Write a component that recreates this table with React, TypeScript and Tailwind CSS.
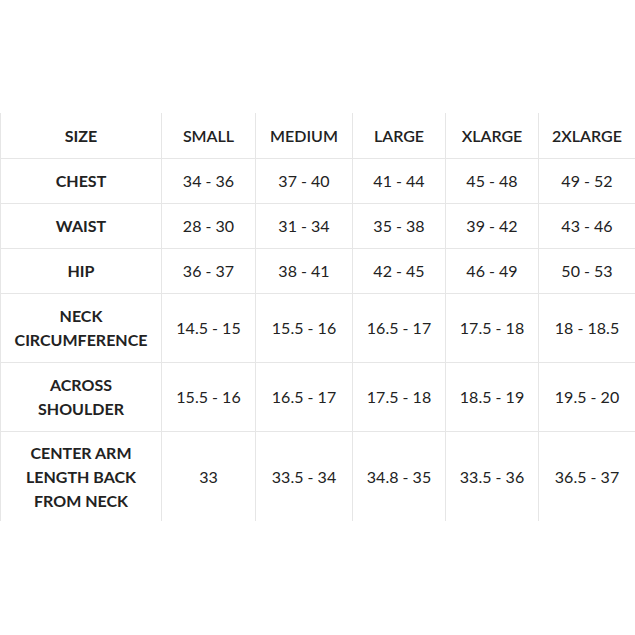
import React from "react";

const headers = ["SMALL", "MEDIUM", "LARGE", "XLARGE", "2XLARGE"];
const rows: { label: string[]; values: string[]; h: string }[] = [
  { label: ["CHEST"], values: ["34 - 36", "37 - 40", "41 - 44", "45 - 48", "49 - 52"], h: "h-[45px]" },
  { label: ["WAIST"], values: ["28 - 30", "31 - 34", "35 - 38", "39 - 42", "43 - 46"], h: "h-[45px]" },
  { label: ["HIP"], values: ["36 - 37", "38 - 41", "42 - 45", "46 - 49", "50 - 53"], h: "h-[45px]" },
  { label: ["NECK", "CIRCUMFERENCE"], values: ["14.5 - 15", "15.5 - 16", "16.5 - 17", "17.5 - 18", "18 - 18.5"], h: "h-[69px]" },
  { label: ["ACROSS", "SHOULDER"], values: ["15.5 - 16", "16.5 - 17", "17.5 - 18", "18.5 - 19", "19.5 - 20"], h: "h-[69px]" },
  { label: ["CENTER ARM", "LENGTH BACK", "FROM NECK"], values: ["33", "33.5 - 34", "34.8 - 35", "33.5 - 36", "36.5 - 37"], h: "h-[89px]" },
];

export default function App() {
  return (
    <div className="w-[635px] h-[635px] bg-white pt-[113px] text-[#222222] text-[16px] leading-[24px]" style={{ fontFamily: "Lato, 'Open Sans', sans-serif" }}>
      <div className="grid grid-cols-[161px_94px_97px_93px_93px_97px]">
        <div className="h-[46px] border-l border-b border-[#e6e6e6] flex items-center justify-center font-bold">SIZE</div>
        {headers.map((h) => (
          <div key={h} className="h-[46px] border-l border-b border-[#e6e6e6] flex items-center justify-center font-semibold">{h}</div>
        ))}
        {rows.map((r, i) => {
          const last = i === rows.length - 1;
          const b = last ? "" : "border-b";
          return (
            <React.Fragment key={i}>
              <div className={`${r.h} border-l ${b} border-[#e6e6e6] flex flex-col items-center justify-center font-bold text-center`}>
                {r.label.map((l) => (
                  <span key={l}>{l}</span>
                ))}
              </div>
              {r.values.map((v, j) => (
                <div key={j} className={`${r.h} border-l ${b} border-[#e6e6e6] flex items-center justify-center`}>{v}</div>
              ))}
            </React.Fragment>
          );
        })}
      </div>
    </div>
  );
}
